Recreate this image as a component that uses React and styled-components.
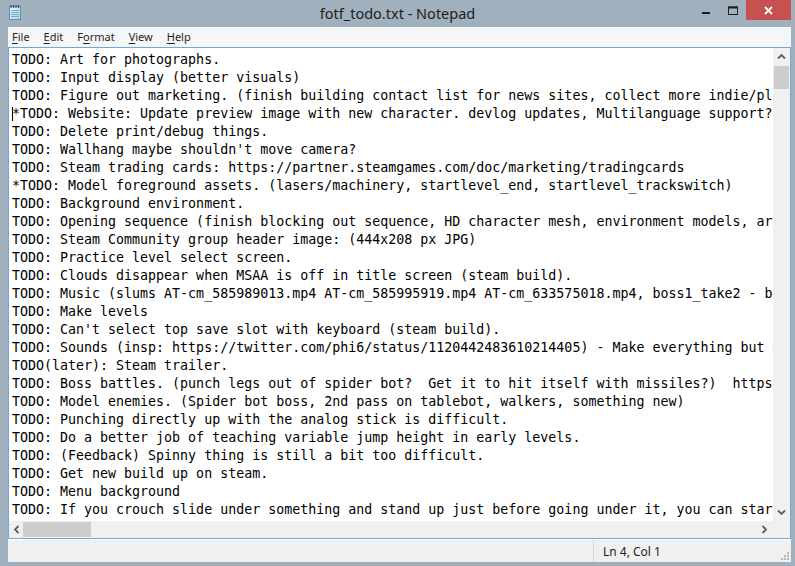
import React from 'react';
import styled, { createGlobalStyle } from 'styled-components';

const GlobalStyle = createGlobalStyle`
  html, body {
    margin: 0;
    padding: 0;
    overflow: hidden;
    background: #a0b0bc;
  }
`;

const Window = styled.div`
  width: 795px;
  height: 566px;
  box-sizing: border-box;
  padding-bottom: 4px;
  display: flex;
  flex-direction: column;
  background: #a0b0bc;
  font-family: "Noto Sans", "Segoe UI", sans-serif;
`;

const TitleBar = styled.div`
  height: 27px;
  flex: none;
  display: grid;
  grid-template-columns: 1fr auto 1fr;
  align-items: start;
`;

const AppIcon = styled.svg`
  margin: 4px 0 0 7px;
`;

const Title = styled.div`
  font-size: 14.5px;
  line-height: 26px;
  color: #1e1e1e;
  white-space: nowrap;
`;

const Controls = styled.div`
  justify-self: end;
  display: flex;
  padding-right: 4px;
`;

const CtrlButton = styled.div`
  width: ${p => p.$w}px;
  height: 20px;
  display: flex;
  align-items: center;
  justify-content: center;
  background: ${p => (p.$close ? '#c75050' : 'transparent')};
`;

const Frame = styled.div`
  flex: 1;
  min-height: 0;
  margin: 0 4px 0 8px;
  display: flex;
  flex-direction: column;
`;

const MenuBar = styled.div`
  height: 20px;
  flex: none;
  display: flex;
  align-items: center;
  gap: 14px;
  padding-left: 4px;
  background: #f5f6f7;
  font-size: 11px;
  color: #1e1e1e;
`;

const MenuItem = styled.span`
  line-height: 20px;
  u {
    text-decoration: underline;
    text-underline-offset: 2px;
  }
`;

const Editor = styled.div`
  height: 492px;
  flex: none;
  box-sizing: border-box;
  border: 1px solid #6fa8dc;
  background: #fff;
  display: grid;
  grid-template-columns: 1fr 17px;
  grid-template-rows: 1fr 17px;
`;

const TextArea = styled.div`
  overflow: hidden;
  padding: 3px 0 0 3px;
  font-family: "DejaVu Sans Mono", monospace;
  font-size: 13.3px;
  line-height: 18px;
  color: #000;
  white-space: pre;
`;

const Line = styled.div`
  height: 18px;
`;

const Caret = styled.span`
  display: inline-block;
  width: 0;
  height: 14px;
  border-left: 1px solid #000;
  margin-right: -1px;
  vertical-align: -3px;
`;

const VScroll = styled.div`
  background: #f0f0f0;
  display: flex;
  flex-direction: column;
`;

const HScroll = styled.div`
  background: #f0f0f0;
  display: flex;
  align-items: center;
`;

const ArrowBtn = styled.div`
  flex: none;
  width: ${p => p.$w || 17}px;
  height: 17px;
  display: flex;
  align-items: center;
  justify-content: center;
`;

const VThumb = styled.div`
  height: 23px;
  margin: 1px 1px 0;
  background: #cdcdcd;
`;

const HThumb = styled.div`
  width: 68px;
  height: 15px;
  background: #cdcdcd;
`;

const Spacer = styled.div`
  flex: 1;
`;

const Corner = styled.div`
  background: #f0f0f0;
`;

const StatusBar = styled.div`
  flex: 1;
  display: flex;
  background: #f0f0f0;
  border-top: 1px solid #fff;
`;

const StatusPane = styled.div`
  width: 198px;
  box-sizing: border-box;
  display: flex;
  align-items: center;
  border-left: 1px solid #d7d7d7;
  padding-left: 9px;
  font-size: 12px;
  color: #1e1e1e;
`;

const StatusText = styled.span`
  flex: 1;
`;

const Grip = styled.svg`
  align-self: flex-end;
  margin: 0 2px 2px 0;
`;

const Chevron = ({ dir }) => {
  const rot = { up: 0, down: 180, left: -90, right: 90 }[dir];
  return (
    <svg width="9" height="9" viewBox="0 0 9 9">
      <path
        d="M1 6.5 L4.5 3 L8 6.5"
        fill="none"
        stroke="#606060"
        strokeWidth="1.8"
        transform={`rotate(${rot} 4.5 4.5)`}
      />
    </svg>
  );
};

const NotepadIcon = () => (
  <AppIcon width="16" height="16" viewBox="0 0 16 16">
    <defs>
      <linearGradient id="pg" x1="0" y1="0" x2="1" y2="1">
        <stop offset="0" stopColor="#eaf5fb" />
        <stop offset="1" stopColor="#a9d0e6" />
      </linearGradient>
    </defs>
    <rect x="2.5" y="2.5" width="11" height="13" fill="url(#pg)" stroke="#5f8fb0" />
    <path d="M4 6.5h8M4 8.5h8M4 10.5h8M4 12.5h8" stroke="#7fa9c6" strokeWidth="1" />
    <path d="M4 1v3M6.5 1v3M9 1v3M11.5 1v3" stroke="#3c5566" strokeWidth="1.2" />
  </AppIcon>
);

const lines = [
  'TODO: Art for photographs.',
  'TODO: Input display (better visuals)',
  'TODO: Figure out marketing. (finish building contact list for news sites, collect more indie/platformer sites)',
  null,
  'TODO: Delete print/debug things.',
  "TODO: Wallhang maybe shouldn't move camera?",
  'TODO: Steam trading cards: https://partner.steamgames.com/doc/marketing/tradingcards',
  '*TODO: Model foreground assets. (lasers/machinery, startlevel_end, startlevel_trackswitch)',
  'TODO: Background environment.',
  'TODO: Opening sequence (finish blocking out sequence, HD character mesh, environment models, art)',
  'TODO: Steam Community group header image: (444x208 px JPG)',
  'TODO: Practice level select screen.',
  'TODO: Clouds disappear when MSAA is off in title screen (steam build).',
  'TODO: Music (slums AT-cm_585989013.mp4 AT-cm_585995919.mp4 AT-cm_633575018.mp4, boss1_take2 - boss)',
  'TODO: Make levels',
  "TODO: Can't select top save slot with keyboard (steam build).",
  'TODO: Sounds (insp: https://twitter.com/phi6/status/1120442483610214405) - Make everything but music',
  'TODO(later): Steam trailer.',
  'TODO: Boss battles. (punch legs out of spider bot?  Get it to hit itself with missiles?)  https://',
  'TODO: Model enemies. (Spider bot boss, 2nd pass on tablebot, walkers, something new)',
  'TODO: Punching directly up with the analog stick is difficult.',
  'TODO: Do a better job of teaching variable jump height in early levels.',
  'TODO: (Feedback) Spinny thing is still a bit too difficult.',
  'TODO: Get new build up on steam.',
  'TODO: Menu background',
  'TODO: If you crouch slide under something and stand up just before going under it, you can start',
];

const caretLine = '*TODO: Website: Update preview image with new character. devlog updates, Multilanguage support?';

export default function App() {
  return (
    <>
      <GlobalStyle />
      <Window>
        <TitleBar>
          <NotepadIcon />
          <Title>fotf_todo.txt - Notepad</Title>
          <Controls>
            <CtrlButton $w={26}>
              <svg width="9" height="9" viewBox="0 0 9 9">
                <rect x="0" y="6" width="8" height="2" fill="#1e1e1e" />
              </svg>
            </CtrlButton>
            <CtrlButton $w={27}>
              <svg width="10" height="9" viewBox="0 0 10 9">
                <rect x="0.5" y="1" width="9" height="7.5" fill="none" stroke="#1e1e1e" />
                <rect x="0" y="0.5" width="10" height="2" fill="#1e1e1e" />
              </svg>
            </CtrlButton>
            <CtrlButton $w={45} $close>
              <svg width="9" height="9" viewBox="0 0 9 9">
                <path d="M1 1L8 8M8 1L1 8" stroke="#fff" strokeWidth="1.8" />
              </svg>
            </CtrlButton>
          </Controls>
        </TitleBar>

        <Frame>
          <MenuBar>
            <MenuItem><u>F</u>ile</MenuItem>
            <MenuItem><u>E</u>dit</MenuItem>
            <MenuItem>F<u>o</u>rmat</MenuItem>
            <MenuItem><u>V</u>iew</MenuItem>
            <MenuItem><u>H</u>elp</MenuItem>
          </MenuBar>

          <Editor>
            <TextArea>
              {lines.map((l, i) =>
                l === null ? (
                  <Line key={i}><Caret />{caretLine}</Line>
                ) : (
                  <Line key={i}>{l}</Line>
                )
              )}
            </TextArea>
            <VScroll>
              <ArrowBtn><Chevron dir="up" /></ArrowBtn>
              <VThumb />
              <Spacer />
              <ArrowBtn><Chevron dir="down" /></ArrowBtn>
            </VScroll>
            <HScroll>
              <ArrowBtn $w={14}><Chevron dir="left" /></ArrowBtn>
              <HThumb />
              <Spacer />
              <ArrowBtn><Chevron dir="right" /></ArrowBtn>
            </HScroll>
            <Corner />
          </Editor>

          <StatusBar>
            <Spacer />
            <StatusPane>
              <StatusText>Ln 4, Col 1</StatusText>
              <Grip width="8" height="8" viewBox="0 0 8 8">
                <rect x="6" y="0" width="2" height="2" fill="#b8b8b8" />
                <rect x="3" y="3" width="2" height="2" fill="#b8b8b8" />
                <rect x="6" y="3" width="2" height="2" fill="#b8b8b8" />
                <rect x="0" y="6" width="2" height="2" fill="#b8b8b8" />
                <rect x="3" y="6" width="2" height="2" fill="#b8b8b8" />
                <rect x="6" y="6" width="2" height="2" fill="#b8b8b8" />
              </Grip>
            </StatusPane>
          </StatusBar>
        </Frame>
      </Window>
    </>
  );
}
